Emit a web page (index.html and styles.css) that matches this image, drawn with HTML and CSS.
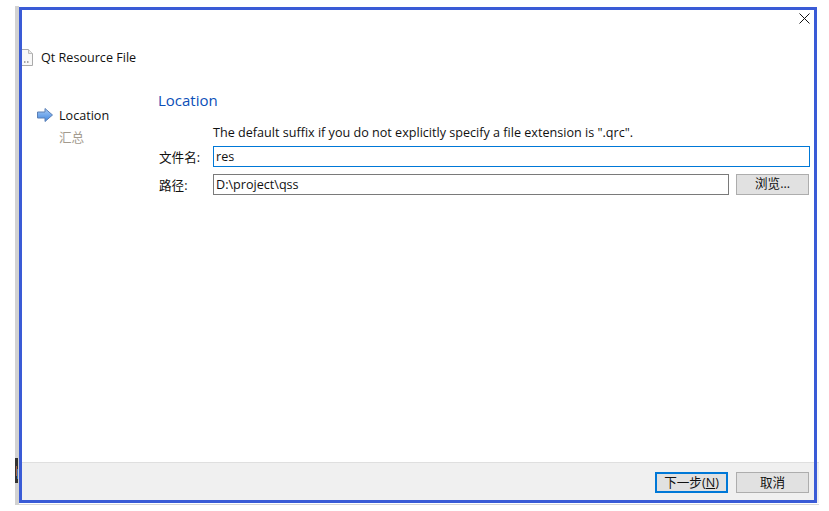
FILE: index.html
```html
<!DOCTYPE html>
<html lang="zh">
<head>
<meta charset="utf-8">
<title>Qt Resource File</title>
<link rel="stylesheet" href="styles.css">
</head>
<body>
<div class="shadow">
  <div class="taskbar-sliver"></div>
  <div class="dialog">
    <div class="titlebar">
      <svg class="close" width="11" height="11" viewBox="0 0 11 11"><path d="M.5 .5L10.500 10.500M10.500 .5L.5 10.500" stroke="#111" stroke-width="1" fill="none"/></svg>
    </div>
    <header class="heading">
      <svg class="file-icon" width="11" height="17" viewBox="0 0 11 17"><path d="M0 .5H6.500L10.500 4.500V16.500H0" fill="#f8f8f8" stroke="#aaa"/><path d="M6.500 .5V4.500H10.500" fill="#e8e8e8" stroke="#bbb"/><path d="M2 13H3.500M5 13H6.500" stroke="#555"/></svg>
      <span class="heading-text">Qt Resource File</span>
    </header>
    <main class="content">
      <nav class="steps">
        <div class="step current">
          <svg class="arrow" width="16" height="14" viewBox="0 0 16 14"><defs><linearGradient id="ag" x1="0" y1="0" x2="0" y2="1"><stop offset="0" stop-color="#a9ccf5"/><stop offset="1" stop-color="#3f86e0"/></linearGradient></defs><path d="M.5 4H8V.5L15.500 7L8 13.500V10H.5Z" fill="url(#ag)" stroke="#5b7fb5"/></svg>
          <span>Location</span>
        </div>
        <div class="step pending"><span>汇总</span></div>
      </nav>
      <section class="page">
        <h1 class="page-title">Location</h1>
        <div class="form">
          <p class="hint">The default suffix if you do not explicitly specify a file extension is ".qrc".</p>
          <div class="row">
            <label class="label">文件名:</label>
            <div class="field focused">res</div>
          </div>
          <div class="row">
            <label class="label">路径:</label>
            <div class="field">D:\project\qss</div>
            <button class="btn browse" type="button">浏览...</button>
          </div>
        </div>
      </section>
    </main>
    <footer class="footer">
      <button class="btn default" type="button">下一步(<u>N</u>)</button>
      <button class="btn" type="button">取消</button>
    </footer>
  </div>
</div>
</body>
</html>
```
FILE: styles.css
```css
* { box-sizing: border-box; }
html, body { margin: 0; height: 100%; background: #fff; }
body {
  padding: 6px 10px 6px 15px;
  font-family: "Open Sans", "Noto Sans CJK SC", sans-serif;
  font-size: 12.6px;
  color: #111;
  overflow: hidden;
}
.shadow {
  position: relative;
  width: 804px;
  height: 499px;
  padding: 1px 2px 1px 4px;
  background: linear-gradient(#d2d2d2, #d2d2d2) left top / 4px 100% no-repeat,
              linear-gradient(#d8d8d8, #d8d8d8) left bottom / 100% 1px no-repeat,
              linear-gradient(#dfdfdf, #dfdfdf) right 0 top 456px / 2px 1px no-repeat,
              linear-gradient(#f0f0f0, #f0f0f0) right 0 top 457px / 2px 40px no-repeat;
}
.taskbar-sliver {
  position: absolute;
  left: 0;
  top: 452px;
  width: 3px;
  height: 25px;
  background: linear-gradient(#4a78b8, #4a78b8) right 0 top 11px / 1px 10px no-repeat,
              linear-gradient(#a5654a, #a5654a) left 1px top 8px / 1px 10px no-repeat,
              #333;
}
.dialog {
  width: 798px;
  height: 496px;
  border: 3px solid #3a5bd6;
  background: #fff;
  display: flex;
  flex-direction: column;
}
.titlebar { height: 29px; display: flex; justify-content: flex-end; padding: 3px 4px 0 0; }
.close { display: block; }
.heading { height: 17px; display: flex; align-items: center; margin-top: 10px; }
.file-icon { flex: none; }
.heading-text { margin-left: 8px; }
.content { flex: 1; display: flex; padding-top: 24px; min-height: 0; }
.steps { width: 136px; padding: 14px 0 0 15px; flex: none; }
.step { display: flex; align-items: center; height: 22px; }
.step .arrow { flex: none; margin-right: 6px; }
.step.pending { color: #a39b8e; padding-left: 22px; height: 20px; }
.page { flex: 1; min-width: 0; padding-right: 4px; }
.page-title { margin: 0; font-size: 15px; font-weight: 400; color: #0b4fb8; line-height: 20px; }
.form { padding-top: 13px; }
.hint { margin: 0 0 4px 55px; line-height: 19px; height: 19px; }
.row { display: flex; align-items: center; height: 20px; margin-bottom: 8px; }
.label { width: 55px; flex: none; padding-left: 1px; }
.field {
  flex: 1;
  height: 21px;
  border: 1px solid #7a7a7a;
  padding-left: 2px;
  line-height: 19px;
  background: #fff;
}
.field.focused { border-color: #0078d7; }
.btn {
  font: inherit;
  line-height: 14px;
  color: inherit;
  width: 73px;
  height: 21px;
  padding: 0;
  border: 1px solid #adadad;
  background: #e1e1e1;
}
.btn.browse { margin-left: 7px; margin-right: 1px; }
.btn.default { border: 2px solid #0078d7; }
.footer {
  height: 38px;
  border-top: 1px solid #dfdfdf;
  background: #f0f0f0;
  display: flex;
  justify-content: flex-end;
  gap: 8px;
  padding: 9px 5px 0 0;
  flex: none;
}
```
